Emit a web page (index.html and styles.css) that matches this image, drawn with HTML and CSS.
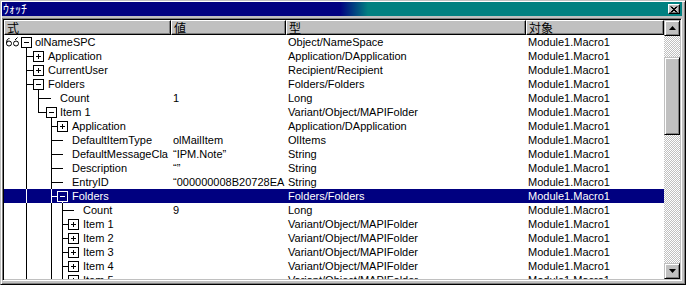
FILE: index.html
```html
<!DOCTYPE html>
<html lang="ja">
<head>
  <meta charset="UTF-8">
  <title>ｳｫｯﾁ</title>
  <link rel="stylesheet" href="styles.css">
</head>
<body>
  <div class="window">
    <div class="titlebar">
      <span class="title">ｳｫｯﾁ</span>
      <span class="close-btn">
        <svg width="8" height="7" viewBox="0 0 8 7"><path d="M0.5 0.5 L6.5 6.5 M6.5 0.5 L0.5 6.5 M1.5 0.5 L7.5 6.5 M7.5 0.5 L1.5 6.5" stroke="#000" stroke-width="1"/></svg>
      </span>
    </div>

    <div class="listview">
      <div class="lv-main">
        <div class="lv-header">
          <div class="hcell col-expr">式</div>
          <div class="hcell col-value">値</div>
          <div class="hcell col-type">型</div>
          <div class="hcell col-ctx">対象</div>
        </div>
        <div class="lv-body" id="rows"></div>
      </div>
      <div class="scrollbar">
        <div class="sb-btn">
          <svg width="7" height="4" viewBox="0 0 7 4"><path d="M3.5 0 L7 4 L0 4 Z" fill="#000"/></svg>
        </div>
        <div class="sb-track">
          <div class="sb-gap"></div>
          <div class="sb-thumb"></div>
        </div>
        <div class="sb-btn">
          <svg width="7" height="4" viewBox="0 0 7 4"><path d="M0 0 L7 0 L3.5 4 Z" fill="#000"/></svg>
        </div>
      </div>
    </div>
  </div>

  <script>
    const rows = [
      { lvl: 0, name: 'olNameSPC', val: '', type: 'Object/NameSpace', exp: '-' },
      { lvl: 1, name: 'Application', val: '', type: 'Application/DApplication', exp: '+' },
      { lvl: 1, name: 'CurrentUser', val: '', type: 'Recipient/Recipient', exp: '+' },
      { lvl: 1, name: 'Folders', val: '', type: 'Folders/Folders', exp: '-' },
      { lvl: 2, name: 'Count', val: '1', type: 'Long' },
      { lvl: 2, name: 'Item 1', val: '', type: 'Variant/Object/MAPIFolder', exp: '-' },
      { lvl: 3, name: 'Application', val: '', type: 'Application/DApplication', exp: '+' },
      { lvl: 3, name: 'DefaultItemType', val: 'olMailItem', type: 'OlItems' },
      { lvl: 3, name: 'DefaultMessageCla', val: '\u201CIPM.Note\u201D', type: 'String' },
      { lvl: 3, name: 'Description', val: '\u201C\u201D', type: 'String' },
      { lvl: 3, name: 'EntryID', val: '\u201C000000008B20728EA', type: 'String' },
      { lvl: 3, name: 'Folders', val: '', type: 'Folders/Folders', exp: '-', sel: true },
      { lvl: 4, name: 'Count', val: '9', type: 'Long' },
      { lvl: 4, name: 'Item 1', val: '', type: 'Variant/Object/MAPIFolder', exp: '+' },
      { lvl: 4, name: 'Item 2', val: '', type: 'Variant/Object/MAPIFolder', exp: '+' },
      { lvl: 4, name: 'Item 3', val: '', type: 'Variant/Object/MAPIFolder', exp: '+' },
      { lvl: 4, name: 'Item 4', val: '', type: 'Variant/Object/MAPIFolder', exp: '+' },
      { lvl: 4, name: 'Item 5', val: '', type: 'Variant/Object/MAPIFolder', exp: '+' }
    ];

    // x positions (page pixels) of the box centres and label starts per level
    const CX = [26, 38, 51, 62, 73];
    const TX = [35, 48, 60, 72, 83];
    const X0 = 4;
    // levels whose sibling lists go on below the visible part
    const goesOn = { 1: true, 2: false, 3: true, 4: true };

    function continues(i, lvl) {
      for (let j = i + 1; j < rows.length; j++) {
        if (rows[j].lvl < lvl) return false;
        if (rows[j].lvl === lvl) return true;
      }
      return goesOn[lvl];
    }

    function guides(i) {
      const r = rows[i];
      const ink = r.sel ? '#fff' : '#000';
      const fill = r.sel ? '#000080' : '#fff';
      const w = TX[r.lvl] - X0 - 1;
      let d = '';

      for (let a = 0; a < r.lvl - 1; a++) {
        if (continues(i, a + 1)) d += `M${CX[a] + 0.5} 0V14`;
      }
      if (r.lvl > 0) {
        const p = CX[r.lvl - 1] + 0.5;
        d += `M${p} 0V${continues(i, r.lvl) ? 14 : 7.5}`;
        const end = r.exp ? CX[r.lvl] - 5 : TX[r.lvl] - 9;
        d += `M${p - 0.5} 7.5H${end}`;
      }

      const c = CX[r.lvl];
      let box = '';
      if (r.exp) {
        box += `<rect x="${c - 4.5}" y="2.5" width="10" height="10" fill="${fill}" stroke="${ink}"/>`;
        let m = `M${c - 2} 7.5H${c + 3}`;
        if (r.exp === '+') m += `M${c + 0.5} 5V10`;
        box += `<path d="${m}" stroke="${ink}"/>`;
        const next = rows[i + 1];
        if (r.exp === '-' && next && next.lvl > r.lvl) d += `M${c + 0.5} 13V14`;
      }

      let icon = '';
      if (r.lvl === 0) {
        icon = `<g fill="none" stroke="#000">
          <circle cx="9" cy="8.5" r="2.5"/><circle cx="16" cy="8.5" r="2.5"/>
          <path d="M6.5 8.5C6.5 5 7.5 3.5 9.5 3.5M15 5L17.5 2.5"/>
        </g>`;
      }

      return `<svg class="guides" width="${w}" height="14" viewBox="${X0} 0 ${w} 14">
        <path d="${d}" stroke="${ink}" fill="none"/>${box}${icon}</svg>`;
    }

    const html = rows.map((r, i) => `
      <div class="row${r.sel ? ' selected' : ''}">
        <div class="cell col-expr">${guides(i)}<span class="label">${r.name}</span></div>
        <div class="cell col-value">${r.val}</div>
        <div class="cell col-type">${r.type}</div>
        <div class="cell col-ctx">Module1.Macro1</div>
      </div>`).join('');

    document.getElementById('rows').innerHTML = html;
  </script>
</body>
</html>
```

FILE: styles.css
```css
body {
  margin: 0;
  background: #c0c0c0;
  font-family: "Liberation Sans", "Noto Sans CJK JP", sans-serif;
  font-size: 11px;
  color: #000;
}
.window {
  width: 686px;
  height: 285px;
  box-sizing: border-box;
  display: flex;
  flex-direction: column;
  background: #c0c0c0;
  border: 1px solid;
  border-color: #c0c0c0 #000 #000 #c0c0c0;
  box-shadow: inset 1px 1px #fff, inset -1px -1px #808080;
  padding: 1px 3px 3px 1px;
}
.titlebar {
  height: 14px;
  flex: none;
  display: flex;
  align-items: center;
  justify-content: space-between;
  padding: 0 2px 0 1px;
  background: linear-gradient(to right, #000080 338px, #008080 366px);
}
.title {
  color: #fff;
  font-family: "Noto Sans CJK JP", sans-serif;
  font-size: 12px;
  line-height: 14px;
}
.close-btn {
  width: 12px;
  height: 10px;
  box-sizing: border-box;
  display: flex;
  align-items: center;
  justify-content: center;
  background: #c0c0c0;
  border: 1px solid;
  border-color: #fff #000 #000 #fff;
  box-shadow: inset -1px -1px #808080;
}
.listview {
  margin-top: 2px;
  flex: 1;
  min-height: 0;
  display: flex;
  border: 1px solid;
  border-color: #808080 #fff #fff #808080;
  box-shadow: inset 1px 1px #000, inset -1px -1px #c0c0c0;
  padding: 1px;
  background: #c0c0c0;
}
.lv-main {
  width: 660px;
  display: flex;
  flex-direction: column;
  background: #fff;
  overflow: hidden;
}
.lv-header {
  display: flex;
  height: 15px;
  flex: none;
}
.hcell {
  box-sizing: border-box;
  height: 15px;
  background: #c0c0c0;
  border-top: 1px solid #fff;
  border-left: 1px solid #fff;
  border-right: 1px solid #000;
  border-bottom: 1px solid #000;
  box-shadow: inset -1px -1px #808080;
  font-family: "Noto Sans CJK JP", sans-serif;
  font-size: 12px;
  line-height: 13px;
  padding-left: 2px;
}
.col-expr { width: 167px; }
.col-value { width: 115px; }
.col-type { width: 240px; }
.col-ctx { width: 138px; }
.lv-body {
  flex: 1;
  overflow: hidden;
}
.row {
  display: flex;
  height: 14px;
  line-height: 14px;
}
.row.selected {
  background: #000080;
  color: #fff;
}
.cell {
  box-sizing: border-box;
  white-space: nowrap;
  overflow: hidden;
  padding-left: 2px;
}
.cell.col-expr {
  display: flex;
  padding-left: 0;
}
.guides {
  flex: none;
  display: block;
}
.label {
  padding-left: 1px;
}
.scrollbar {
  width: 16px;
  display: flex;
  flex-direction: column;
}
.sb-btn, .sb-thumb {
  box-sizing: border-box;
  background: #c0c0c0;
  border: 1px solid;
  border-color: #c0c0c0 #000 #000 #c0c0c0;
  box-shadow: inset 1px 1px #fff, inset -1px -1px #808080;
}
.sb-btn {
  height: 16px;
  flex: none;
  display: flex;
  align-items: center;
  justify-content: center;
}
.sb-track {
  flex: 1;
  display: flex;
  flex-direction: column;
  background-color: #fff;
  background-image: repeating-conic-gradient(#c0c0c0 0 25%, #fff 0 50%);
  background-size: 2px 2px;
}
.sb-gap {
  height: 21px;
}
.sb-thumb {
  height: 78px;
}
```
